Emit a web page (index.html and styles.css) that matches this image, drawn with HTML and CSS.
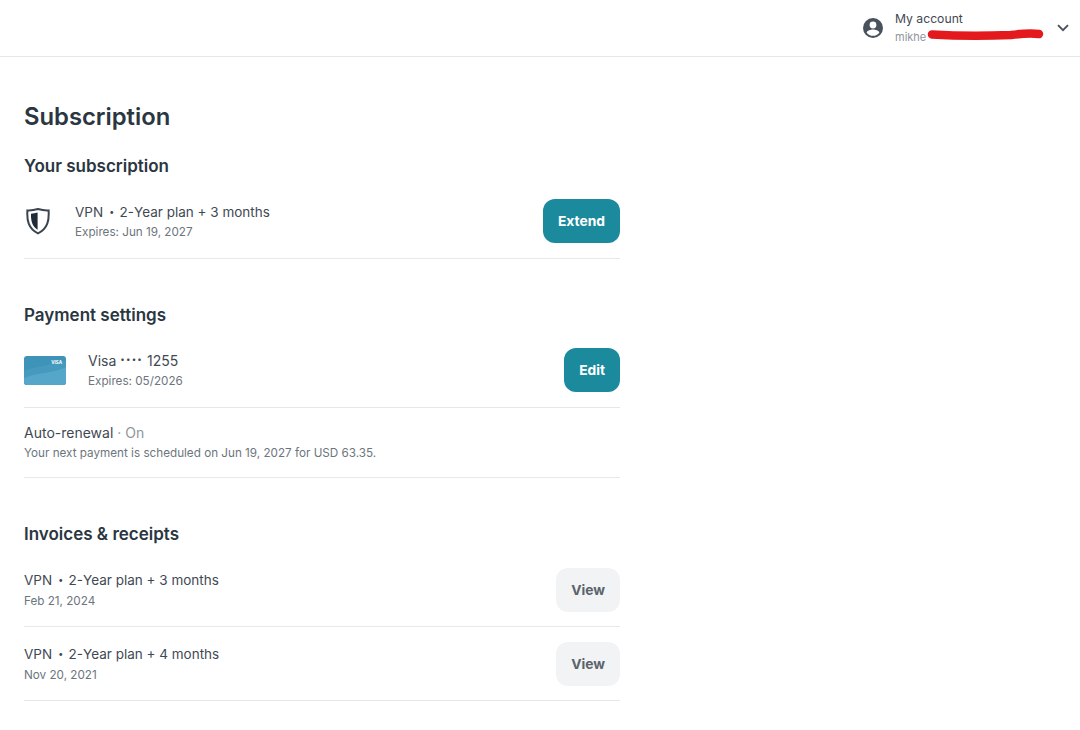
FILE: index.html
```html
<!DOCTYPE html>
<html lang="en">
<head>
    <meta charset="UTF-8">
    <meta name="viewport" content="width=device-width, initial-scale=1.0">
    <title>Subscription</title>
    <link rel="stylesheet" href="styles.css">
</head>
<body>

    <header class="topbar">
        <div class="account">
            <svg class="account-icon" viewBox="0 0 24 24" width="24" height="24">
                <path fill="#49525c" d="M12 2a10 10 0 1 0 0 20 10 10 0 0 0 0-20zm0 3.6a3.4 3.4 0 1 1 0 6.8 3.4 3.4 0 0 1 0-6.8zm0 14.2c-2.6 0-4.9-1.2-6.3-3.1.1-2 4.2-3.1 6.3-3.1s6.2 1.1 6.3 3.1c-1.4 1.9-3.7 3.1-6.3 3.1z"/>
            </svg>
            <div class="account-text">
                <span class="account-title">My account</span>
                <span class="account-mail">mikhe</span>
                <svg class="scribble" viewBox="0 0 118 14" width="118" height="14">
                    <path d="M5 7.5 C30 9 60 9 84 8 C95 6.5 105 6 112 7" fill="none" stroke="#e3191d" stroke-width="8.5" stroke-linecap="round"/>
                </svg>
            </div>
            <svg class="chevron" viewBox="0 0 12 8" width="12" height="8">
                <path d="M1 1.2 L6 6.2 L11 1.2" fill="none" stroke="#49525c" stroke-width="1.9"/>
            </svg>
        </div>
    </header>

    <main class="content">
        <h1>Subscription</h1>

        <section class="block first">
            <h2>Your subscription</h2>
            <div class="row">
                <svg class="shield" viewBox="0 0 24 28" width="24" height="28">
                    <path d="M12 2 C16 3.2 19.5 3.6 22.6 3.4 C23.2 13 22 21.5 12 26.4 C2 21.5 0.8 13 1.4 3.4 C4.5 3.6 8 3.2 12 2 Z" fill="none" stroke="#3a4550" stroke-width="2"/>
                    <path d="M11.6 5.6 C9.6 6.3 7.4 6.7 5 6.8 C4.8 13.4 6 19.4 11.6 22.8 Z" fill="#1f2b36"/>
                </svg>
                <div class="info">
                    <p class="name">VPN<span class="sep">・</span>2-Year plan + 3 months</p>
                    <p class="sub">Expires: Jun 19, 2027</p>
                </div>
                <button class="btn primary">Extend</button>
            </div>
        </section>

        <section class="block">
            <h2>Payment settings</h2>
            <div class="row">
                <svg class="card" viewBox="0 0 42 29" width="42" height="29">
                    <rect width="42" height="29" fill="#3d94b8"/>
                    <path d="M0 15 C12 10 24 10 42 4 V29 H0 Z" fill="#459abe"/>
                    <path d="M0 22 C14 16 28 18 42 11 V29 H0 Z" fill="#56a6c9"/>
                    <text x="38" y="8" text-anchor="end" class="card-brand">VISA</text>
                </svg>
                <div class="info">
                    <p class="name big">Visa <span class="dots">••••</span> 1255</p>
                    <p class="sub">Expires: 05/2026</p>
                </div>
                <button class="btn primary">Edit</button>
            </div>
            <div class="renewal">
                <p class="name big">Auto-renewal <span class="muted">· On</span></p>
                <p class="note">Your next payment is scheduled on Jun 19, 2027 for USD 63.35.</p>
            </div>
        </section>

        <section class="block">
            <h2>Invoices &amp; receipts</h2>
            <div class="row invoice">
                <div class="info">
                    <p class="name">VPN<span class="sep">・</span>2-Year plan + 3 months</p>
                    <p class="sub">Feb 21, 2024</p>
                </div>
                <button class="btn plain">View</button>
            </div>
            <div class="row invoice">
                <div class="info">
                    <p class="name">VPN<span class="sep">・</span>2-Year plan + 4 months</p>
                    <p class="sub">Nov 20, 2021</p>
                </div>
                <button class="btn plain">View</button>
            </div>
        </section>
    </main>

</body>
</html>
```
FILE: styles.css
```css
* {
    box-sizing: border-box;
}
body {
    margin: 0;
    font-family: Inter, "Liberation Sans", sans-serif;
    color: #2a3641;
    background: white;
}
p, h1, h2 {
    margin: 0;
}
.topbar {
    height: 57px;
    border-bottom: 1px solid #e6e7e9;
    display: flex;
    justify-content: flex-end;
}
.account {
    display: flex;
    align-items: center;
    padding-right: 11px;
}
.account-icon {
    margin-right: 10px;
}
.account-text {
    position: relative;
    width: 162px;
    margin-top: -2px;
    display: flex;
    flex-direction: column;
    gap: 3px;
}
.account-title {
    font-size: 12.2px;
    line-height: 16px;
    color: #3f4953;
}
.account-mail {
    font-size: 11px;
    line-height: 14px;
    color: #8f969d;
}
.scribble {
    position: absolute;
    left: 32px;
    top: 16px;
}
.chevron {
    display: block;
}
.content {
    width: 596px;
    margin-left: 24px;
    padding-top: 45px;
}
h1 {
    font-size: 23.8px;
    line-height: 30px;
    font-weight: 600;
}
h2 {
    font-size: 17px;
    line-height: 22px;
    font-weight: 600;
}
.block {
    margin-top: 45px;
}
.block.first {
    margin-top: 23px;
}
.row {
    display: flex;
    align-items: center;
    margin-top: 22px;
    padding-bottom: 15px;
    border-bottom: 1px solid #e6e7e9;
}
.row.invoice {
    margin-top: 0;
    padding: 15px 0 14px;
}
.block h2 + .row.invoice {
    margin-top: 8px;
}
.shield {
    margin: 0 25px 0 2px;
}
.card {
    margin-right: 22px;
    display: block;
    border-radius: 3px;
}
.card-brand {
    font-size: 4.5px;
    font-weight: 700;
    fill: white;
}
.info {
    flex: 1;
}
.invoice .info {
    margin-top: -2px;
}
.name {
    font-size: 13.5px;
    line-height: 20px;
    color: #3f4953;
}
.name.big {
    font-size: 14px;
}
.sep {
    margin: 0 1px 0 2px;
    font-family: "Noto Sans CJK JP", sans-serif;
}
.sub {
    margin-top: 1px;
    font-size: 11.7px;
    line-height: 18px;
    color: #6d757d;
}
.invoice .sub {
    margin-top: 2px;
}
.dots {
    font-size: 8px;
    line-height: 1;
    letter-spacing: 1.2px;
    vertical-align: 4px;
}
.muted {
    color: #8f969d;
}
.renewal {
    padding: 15px 0 15px;
    border-bottom: 1px solid #e6e7e9;
}
.note {
    margin-top: 2px;
    font-size: 11.7px;
    line-height: 17px;
    color: #6d757d;
}
.btn {
    height: 44px;
    padding: 0 15px;
    border: none;
    border-radius: 12px;
    font-family: inherit;
    font-size: 13.8px;
    font-weight: 700;
    cursor: pointer;
}
.primary {
    background: #1b8a9d;
    color: white;
}
.plain {
    background: #f2f3f5;
    color: #5b636b;
}
```
